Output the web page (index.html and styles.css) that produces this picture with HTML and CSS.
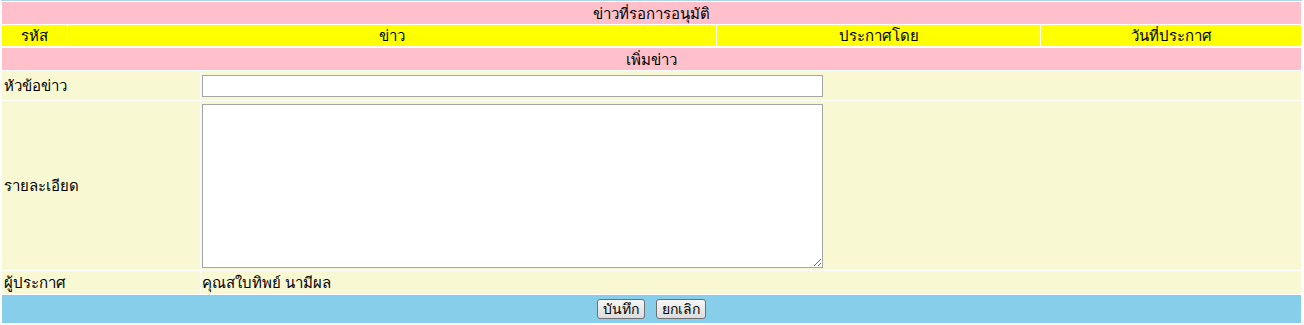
FILE: index.html
```html
<!DOCTYPE html>
<html lang="th">
<head>
  <meta charset="UTF-8">
  <title>ข่าว</title>
  <link rel="stylesheet" href="styles.css">
</head>
<body>

<div class="topline"></div>

<table class="news">
  <tr class="title-row">
    <td colspan="4">ข่าวที่รอการอนุมัติ</td>
  </tr>
  <tr class="head-row">
    <td class="c-id">รหัส</td>
    <td class="c-news">ข่าว</td>
    <td class="c-by">ประกาศโดย</td>
    <td class="c-date">วันที่ประกาศ</td>
  </tr>
</table>

<table class="news form">
  <tr class="title-row">
    <td colspan="2">เพิ่มข่าว</td>
  </tr>
  <tr class="field-row">
    <td class="label">หัวข้อข่าว</td>
    <td class="value"><input type="text" class="txt"></td>
  </tr>
  <tr class="field-row">
    <td class="label">รายละเอียด</td>
    <td class="value"><textarea class="area"></textarea></td>
  </tr>
  <tr class="field-row author">
    <td class="label">ผู้ประกาศ</td>
    <td class="value">คุณสใบทิพย์ นามีผล</td>
  </tr>
  <tr class="button-row">
    <td colspan="2">
      <button class="btn">บันทึก</button>
      <button class="btn">ยกเลิก</button>
    </td>
  </tr>
</table>

</body>
</html>
```

FILE: styles.css
```css
body {
  margin: 0;
  padding: 0 2px 0 1px;
  background-color: #fff;
  font-family: Tahoma, "Noto Sans", "DejaVu Sans", sans-serif;
  font-size: 15px;
  line-height: 17px;
  color: #000;
}
.topline {
  height: 1px;
  background-color: #a9d6ec;
}
table.news {
  width: 100%;
  border-collapse: separate;
  border-spacing: 1px;
  background-color: #fff;
}
td {
  padding: 0;
}
.title-row td {
  background-color: pink;
  text-align: center;
  height: 22px;
}
.head-row td {
  background-color: #ffff00;
  text-align: center;
  height: 21px;
}
.c-id {
  width: 65px;
}
.c-news {
  width: 648px;
}
.c-by {
  width: 323px;
}
.field-row td {
  background-color: #f8f8d2;
}
.field-row .label {
  width: 196px;
  padding-left: 2px;
}
.field-row .value {
  padding-left: 1px;
}
.txt {
  display: block;
  width: 621px;
  height: 22px;
  margin: 4px 0 3px;
  box-sizing: border-box;
  border: 1px solid #a5a5a5;
}
.area {
  display: block;
  width: 621px;
  height: 164px;
  margin: 3px 0 2px;
  box-sizing: border-box;
  border: 1px solid #a5a5a5;
}
.author td {
  height: 23px;
}
.button-row td {
  background-color: #87ceeb;
  text-align: center;
  height: 28px;
}
.btn {
  font-family: inherit;
  font-size: 14px;
  line-height: 16px;
  padding: 0 5px;
  height: 20px;
  margin: 0 4px;
  border: 1px solid #707070;
  border-radius: 3px;
  background: linear-gradient(#f6f6f6, #dcdcdc);
  vertical-align: middle;
}
```
